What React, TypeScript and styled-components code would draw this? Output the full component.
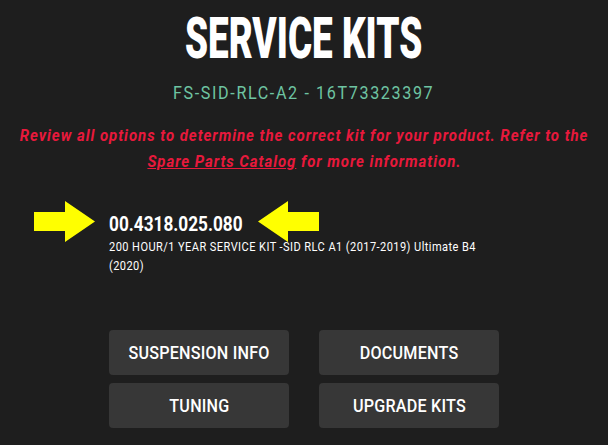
import styled, { createGlobalStyle } from 'styled-components'

const GlobalStyle = createGlobalStyle`
  html, body {
    margin: 0;
    padding: 0;
    background: #1e1e1e;
  }
  body {
    font-family: Roboto, "Liberation Sans", sans-serif;
    color: #ffffff;
  }
`

const kitNumber = '00.4318.025.080'
const kitLines = [
  '200 HOUR/1 YEAR SERVICE KIT -SID RLC A1 (2017-2019) Ultimate B4',
  '(2020)'
]
const actions = ['SUSPENSION INFO', 'DOCUMENTS', 'TUNING', 'UPGRADE KITS']

function Arrow({ flip }: { flip?: boolean }) {
  return (
    <ArrowSvg $flip={flip} width="62" height="41" viewBox="0 0 62 41">
      <polygon points="0,11 31,11 31,0 61,20.5 31,41 31,30 0,30" fill="#ffff00" />
    </ArrowSvg>
  )
}

export default function App() {
  return (
    <Page>
      <GlobalStyle />
      <Title>
        <Cond $k={0.636}>SERVICE KITS</Cond>
      </Title>
      <Model>
        <Cond $k={0.85}>FS-SID-RLC-A2 - 16T73323397</Cond>
      </Model>
      <Notice>
        <Cond $k={0.88}>Review all options to determine the correct kit for your product. Refer to the</Cond>
        <Cond $k={0.88}>
          <CatalogLink href="#">Spare Parts Catalog</CatalogLink> for more information.
        </Cond>
      </Notice>
      <Content>
        <KitNumber>
          <Cond $origin="left">{kitNumber}</Cond>
          <ArrowLeft><Arrow /></ArrowLeft>
          <ArrowRight><Arrow flip /></ArrowRight>
        </KitNumber>
        <KitDescription>
          {kitLines.map((line) => (
            <div key={line}>
              <Cond $k={0.85} $origin="left">{line}</Cond>
            </div>
          ))}
        </KitDescription>
        <Buttons>
          {actions.map((label) => (
            <Button key={label}>
              <Cond $k={0.85}>{label}</Cond>
            </Button>
          ))}
        </Buttons>
      </Content>
    </Page>
  )
}

const Page = styled.div`
  width: 608px;
  height: 445px;
  overflow: hidden;
  padding-top: 9px;
  box-sizing: border-box;
  background: #1e1e1e;
`

// stands in for the condensed webfont, which isn't available
const Cond = styled.span<{ $k?: number; $origin?: string }>`
  display: inline-block;
  white-space: nowrap;
  transform: scaleX(${(p) => p.$k ?? 0.82});
  transform-origin: ${(p) => p.$origin ?? 'center'};
`

const Title = styled.h1`
  margin: 0;
  text-align: center;
  font-size: 58px;
  line-height: 58px;
  font-weight: 900;
  color: #ffffff;
`

const Model = styled.div`
  margin-top: 16px;
  text-align: center;
  font-size: 19px;
  line-height: 20px;
  letter-spacing: 1.9px;
  color: #6ec4a2;
`

const Notice = styled.p`
  display: flex;
  flex-direction: column;
  align-items: center;
  margin: 19px 0 0;
  font-size: 17px;
  line-height: 26px;
  letter-spacing: 1.1px;
  font-weight: 700;
  font-style: italic;
  color: #e8193c;
`

const CatalogLink = styled.a`
  color: inherit;
  text-decoration: underline;
`

const Content = styled.div`
  width: 390px;
  margin: 38px auto 0;
`

const KitNumber = styled.div`
  position: relative;
  font-size: 21px;
  line-height: 24px;
  font-weight: 700;
`

const ArrowLeft = styled.div`
  position: absolute;
  left: -75px;
  top: -11px;
`

const ArrowRight = styled.div`
  position: absolute;
  left: 148px;
  top: -11px;
`

const ArrowSvg = styled.svg<{ $flip?: boolean }>`
  display: block;
  transform: ${(p) => (p.$flip ? 'scaleX(-1)' : 'none')};
`

const KitDescription = styled.div`
  margin-top: 1px;
  font-size: 13px;
  line-height: 19px;
  letter-spacing: 0.5px;
`

const Buttons = styled.div`
  display: grid;
  grid-template-columns: 180px 180px;
  column-gap: 30px;
  row-gap: 8px;
  margin-top: 55px;
`

const Button = styled.button`
  height: 45px;
  border: none;
  border-radius: 4px;
  background: #373737;
  color: #ffffff;
  font-family: Roboto, "Liberation Sans", sans-serif;
  font-size: 19px;
  font-weight: 500;
  letter-spacing: 0.25px;
  padding: 0;
  cursor: pointer;
`
